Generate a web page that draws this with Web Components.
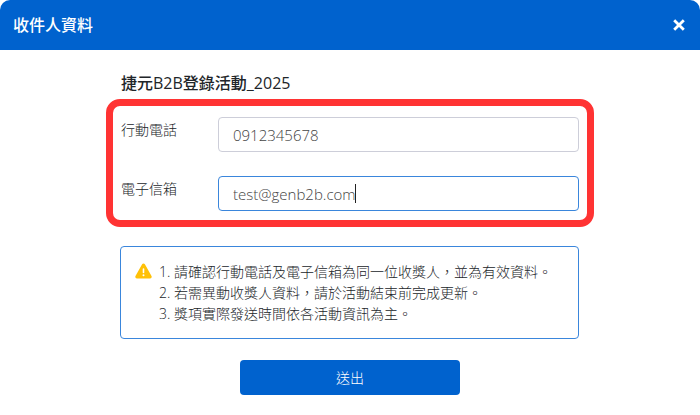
<!DOCTYPE html>
<html lang="zh-Hant">
<head>
  <meta charset="utf-8">
  <meta name="viewport" content="width=device-width, initial-scale=1">
  <title>收件人資料</title>
  <style>
    :root {
      --primary: #0062ce;
      --line: #cdced9;
      --focus: #3a86dc;
      --mark: #ff3333;
    }
    body {
      margin: 0;
      background: #fff;
      color: #212529;
      font: 300 14px/21px 'Open Sans', 'Noto Sans CJK TC', sans-serif;
    }
  </style>
</head>
<body>
  <recipient-dialog>
    <span slot="title">收件人資料</span>
    <span slot="campaign">捷元B2B登錄活動_2025</span>
    <form-field slot="fields" label="行動電話" type="tel" value="0912345678"></form-field>
    <form-field slot="fields" label="電子信箱" type="email" value="test@genb2b.com" active></form-field>
    <notice-box slot="notice">
      <span>1. 請確認行動電話及電子信箱為同一位收獎人，並為有效資料。</span>
      <span>2. 若需異動收獎人資料，請於活動結束前完成更新。</span>
      <span>3. 獎項實際發送時間依各活動資訊為主。</span>
    </notice-box>
    <submit-button slot="action">送出</submit-button>
  </recipient-dialog>

  <script>
    class RecipientDialog extends HTMLElement {
      connectedCallback() {
        this.attachShadow({ mode: 'open' });
        this.shadowRoot.innerHTML = `
          <style>
            :host {
              display: block;
            }
            header {
              display: flex;
              justify-content: space-between;
              align-items: center;
              height: 50px;
              padding: 0 13px;
              box-sizing: border-box;
              border-radius: 10px 10px 0 0;
              background: var(--primary);
              color: #fff;
            }
            h1, h2 {
              margin: 0;
              font-size: 16px;
              font-weight: 500;
              line-height: 24px;
            }
            h2 {
              padding: 0 15px;
            }
            .close {
              display: flex;
              padding: 2px;
              border: 0;
              background: none;
              color: inherit;
              cursor: pointer;
            }
            main {
              display: flex;
              flex-direction: column;
              width: 70%;
              max-width: 488px;
              margin: 0 auto;
              padding: 21px 0;
            }
            .fields {
              display: flex;
              flex-direction: column;
              gap: 24px;
              margin-top: 4px;
              padding: 11px 8px 9px;
              border: 7px solid var(--mark);
              border-radius: 14px;
            }
            .notice {
              margin-top: 19px;
              padding: 0 15px 0 14px;
            }
            .action {
              display: flex;
              justify-content: center;
              margin-top: 21px;
            }
          </style>
          <header>
            <h1><slot name="title"></slot></h1>
            <button class="close" type="button" aria-label="關閉">
              <svg width="12" height="12" viewBox="0 0 12 12" fill="none" stroke="currentColor" stroke-width="2.8">
                <path d="M1.2 1.2l9.6 9.6M10.8 1.2l-9.6 9.6"/>
              </svg>
            </button>
          </header>
          <main>
            <h2><slot name="campaign"></slot></h2>
            <div class="fields"><slot name="fields"></slot></div>
            <div class="notice"><slot name="notice"></slot></div>
            <div class="action"><slot name="action"></slot></div>
          </main>
        `;
      }
    }

    class FormField extends HTMLElement {
      connectedCallback() {
        const label = this.getAttribute('label');
        const type = this.getAttribute('type');
        const value = this.getAttribute('value');
        this.attachShadow({ mode: 'open' });
        this.shadowRoot.innerHTML = `
          <style>
            :host {
              display: grid;
              grid-template-columns: 97px 1fr;
            }
            label {
              line-height: 26px;
            }
            .control {
              position: relative;
              display: flex;
            }
            input {
              flex: 1;
              min-width: 0;
              height: 35px;
              box-sizing: border-box;
              padding: 0 14px;
              border: 1px solid var(--line);
              border-radius: 4px;
              outline: 0;
              background: #fff;
              color: #444;
              font: inherit;
              font-size: 15px;
            }
            .caret {
              display: none;
            }
            :host([active]) input {
              border-color: var(--focus);
              caret-color: transparent;
            }
            /* text cursor of the active field, just after its value */
            :host([active]) .caret {
              display: block;
              position: absolute;
              top: 8px;
              left: 137px;
              width: 1px;
              height: 19px;
              background: #222;
            }
          </style>
          <label for="input">${label}</label>
          <div class="control">
            <input id="input" type="${type}" value="${value}">
            <i class="caret"></i>
          </div>
        `;
      }
    }

    class NoticeBox extends HTMLElement {
      connectedCallback() {
        this.attachShadow({ mode: 'open' });
        this.shadowRoot.innerHTML = `
          <style>
            :host {
              display: flex;
              gap: 7px;
              padding: 14px;
              border: 1px solid var(--focus);
              border-radius: 4px;
            }
            svg {
              flex: none;
              margin-top: 2px;
            }
            .lines {
              display: flex;
              flex-direction: column;
            }
          </style>
          <svg width="17" height="16" viewBox="0 0 17 16" aria-hidden="true">
            <path fill="#ffc107" d="M8.5.5c.6 0 1.1.3 1.4.8l6.6 11.7c.6 1.1-.1 2.5-1.4 2.5H1.9C.6 15.500-.1 14.100.5 13L7.100 1.300c.3-.5.8-.8 1.400-.8z"/>
            <path stroke="#fff" stroke-width="1.6" stroke-linecap="round" d="M8.5 6v3.400"/>
            <circle cx="8.5" cy="12.2" r="1" fill="#fff"/>
          </svg>
          <div class="lines"><slot></slot></div>
        `;
      }
    }

    class SubmitButton extends HTMLElement {
      connectedCallback() {
        this.attachShadow({ mode: 'open' });
        this.shadowRoot.innerHTML = `
          <style>
            :host {
              display: block;
            }
            button {
              width: 220px;
              height: 35px;
              padding: 0;
              border: 0;
              border-radius: 4px;
              background: var(--primary);
              color: #fff;
              font: inherit;
              cursor: pointer;
            }
          </style>
          <button type="button"><slot></slot></button>
        `;
      }
    }

    customElements.define('recipient-dialog', RecipientDialog);
    customElements.define('form-field', FormField);
    customElements.define('notice-box', NoticeBox);
    customElements.define('submit-button', SubmitButton);
  </script>
</body>
</html>
